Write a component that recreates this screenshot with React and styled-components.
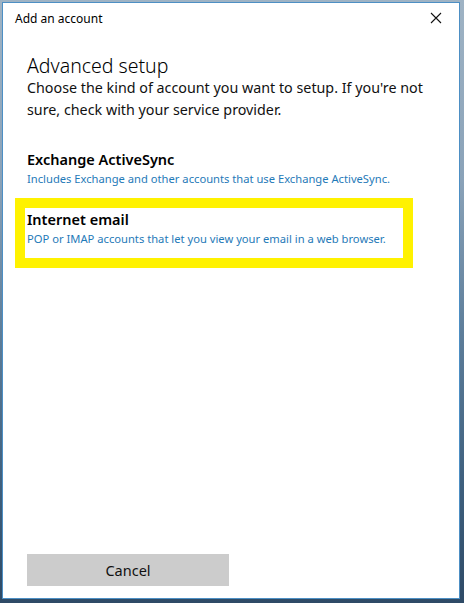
import styled, { createGlobalStyle } from 'styled-components';

const GlobalStyle = createGlobalStyle`
  html, body {
    margin: 0;
    padding: 0;
  }
  body {
    width: 464px;
    height: 603px;
    overflow: hidden;
    background: linear-gradient(180deg, #9fb3c4 0%, #8aa2b8 30%, #5e7e9a 55%, #3f607e 80%, #2e4a66 100%);
    font-family: "Noto Sans", "Open Sans", sans-serif;
  }
`;

const Window = styled.div`
  box-sizing: border-box;
  margin: 2px 0 0 2px;
  width: 458px;
  height: 597px;
  background: #ffffff;
  border: 1px solid #4d8fc4;
  display: flex;
  flex-direction: column;
`;

const TitleBar = styled.div`
  display: flex;
  align-items: center;
  justify-content: space-between;
  height: 30px;
  padding: 0 16px 0 12px;
  font-size: 12px;
  color: #000;
`;

const CloseButton = styled.button`
  border: none;
  background: none;
  padding: 0;
  width: 14px;
  height: 14px;
  display: flex;
  align-items: center;
  justify-content: center;
  cursor: pointer;
`;

const Body = styled.div`
  flex: 1;
  display: flex;
  flex-direction: column;
  padding: 22px 24px 0 24px;
`;

const Heading = styled.h1`
  margin: 0;
  font-size: 19.5px;
  font-weight: 300;
  line-height: 22px;
  color: #000;
`;

const Intro = styled.p`
  margin: 0;
  font-size: 14.3px;
  line-height: 22px;
  color: #111;
`;

const Options = styled.div`
  display: flex;
  flex-direction: column;
  margin-top: 27px;
`;

const Option = styled.div`
  box-sizing: border-box;
  width: ${p => (p.$highlight ? '398px' : 'auto')};
  margin: ${p => (p.$highlight ? '10px 0 0 -12px' : '0')};
  padding: ${p => (p.$highlight ? '0 0 10px 2px' : '0')};
  border: ${p => (p.$highlight ? '10px solid #fff200' : 'none')};
  cursor: pointer;
`;

const OptionTitle = styled.div`
  font-size: 14.5px;
  font-weight: 600;
  line-height: 22px;
  color: #000;
`;

const OptionText = styled.div`
  font-size: 11.2px;
  line-height: 18px;
  color: #1f7ab8;
`;

const Footer = styled.div`
  padding: 0 0 12px 24px;
`;

const CancelButton = styled.button`
  width: 202px;
  height: 32px;
  border: none;
  background: #cccccc;
  font-family: inherit;
  font-size: 14.5px;
  color: #111;
  cursor: pointer;
`;

export default function App() {
  return (
    <>
      <GlobalStyle />
      <Window>
        <TitleBar>
          <span>Add an account</span>
          <CloseButton aria-label="Close">
            <svg width="12" height="12" viewBox="0 0 12 12">
              <path d="M1 1 L11 11 M11 1 L1 11" stroke="#111" strokeWidth="1.1" />
            </svg>
          </CloseButton>
        </TitleBar>
        <Body>
          <Heading>Advanced setup</Heading>
          <Intro>Choose the kind of account you want to setup. If you're not sure, check with your service provider.</Intro>
          <Options>
            <Option>
              <OptionTitle>Exchange ActiveSync</OptionTitle>
              <OptionText>Includes Exchange and other accounts that use Exchange ActiveSync.</OptionText>
            </Option>
            <Option $highlight>
              <OptionTitle>Internet email</OptionTitle>
              <OptionText>POP or IMAP accounts that let you view your email in a web browser.</OptionText>
            </Option>
          </Options>
        </Body>
        <Footer>
          <CancelButton>Cancel</CancelButton>
        </Footer>
      </Window>
    </>
  );
}
